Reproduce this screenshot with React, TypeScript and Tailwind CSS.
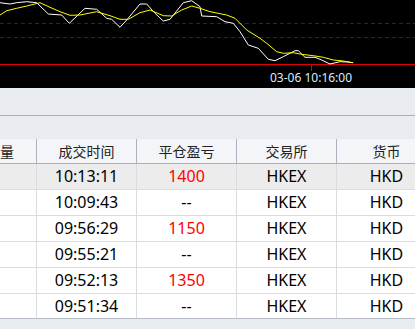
const white: [number, number][] = [
  [0, 2.7], [10, 4], [16.7, 2.7], [26.7, 1.7], [36.7, 2.7], [48.3, 14], [61.7, 15], [69.3, 23.3],
  [85, 8.3], [96.7, 9.3], [106.7, 18.3], [111.7, 19.3], [120, 27.3], [126.7, 20], [140, 4],
  [146.7, 4], [155, 13.3], [163.3, 21], [170, 19.3], [183.3, 2.7], [191.7, 0.7], [200, 6.7],
  [201.7, 16], [216.7, 16.7], [225, 21.7], [233.3, 23.3], [240, 31.7], [248.3, 45], [258.3, 48.3],
  [268.3, 59.3], [275, 60.7], [283.3, 56.7], [295, 50.7], [298.3, 50.7], [305, 57.3], [315, 57.3],
  [321.7, 60], [330, 64], [340, 61.7], [346.7, 62], [353.3, 62.7],
];

const yellow: [number, number][] = [
  [0, 15], [6.7, 10.7], [16.7, 8.3], [26.7, 6], [40, 2.7], [50, 7.3], [60, 11.7], [70, 15.3],
  [80, 15], [96.7, 11.7], [110, 15.7], [120, 19.3], [128.3, 19.3], [140, 12.7], [150, 10],
  [163.3, 15.7], [171.7, 16], [181.7, 10], [191.7, 6], [200, 8.3], [210, 11.7], [226.7, 15],
  [235, 18.3], [246.7, 30], [260, 38.3], [266.7, 43.3], [276.7, 51.7], [283.3, 53.3],
  [293.3, 52.7], [301.7, 54.3], [313.3, 55.7], [323.3, 57.3], [333.3, 60], [343.3, 61], [352.7, 62.7],
];

const pts = (p: [number, number][]) => p.map(([x, y]) => `${x},${y}`).join(" ");

const rows = [
  { time: "10:13:11", pnl: "1400", active: true },
  { time: "10:09:43", pnl: "--" },
  { time: "09:56:29", pnl: "1150" },
  { time: "09:55:21", pnl: "--" },
  { time: "09:52:13", pnl: "1350" },
  { time: "09:51:34", pnl: "--", last: true },
];

function Chart() {
  return (
    <svg width={415} height={88} className="block bg-black">
      <line x1={0} y1={23.5} x2={415} y2={23.5} stroke="#8a0000" strokeDasharray="4 3" />
      <line x1={0} y1={37.5} x2={415} y2={37.5} stroke="#8a0000" strokeDasharray="4 3" />
      <line x1={0} y1={64.5} x2={415} y2={64.5} stroke="#e00000" />
      <line x1={311.5} y1={64} x2={311.5} y2={71} stroke="#e00000" />
      <polyline points={pts(white)} fill="none" stroke="#ffffff" strokeWidth={1} />
      <polyline points={pts(yellow)} fill="none" stroke="#ffff00" strokeWidth={1} />
      <text
        x={270}
        y={82}
        fill="#d8ecff"
        fontSize={12}
        fontFamily='"Noto Sans", sans-serif'
      >
        03-06 10:16:00
      </text>
    </svg>
  );
}

export default function App() {
  const headers = ["成交时间", "平仓盈亏", "交易所", "货币"];
  return (
    <div className="h-[329px] w-[415px] overflow-hidden bg-[#e8ebf0]">
      <Chart />
      <div className="h-[28px] border-b border-[#aab1bc] bg-[#e8ebf0]" />
      <div className="h-[23px] bg-[#e8ebf0]" />
      <div className="w-[437px] font-['Noto_Sans','Noto_Sans_CJK_SC',sans-serif] text-black">
        <div className="flex h-[25px] border-b border-[#aab1bc] bg-[#f3f5f8] text-[14px] leading-[24px] font-['Noto_Sans_CJK_SC',sans-serif] text-[#222]">
          <div className="w-[37px] shrink-0 border-r border-[#aab1bc]">量</div>
          {headers.map((h) => (
            <div key={h} className="w-[100px] shrink-0 border-r border-[#aab1bc] text-center">
              {h}
            </div>
          ))}
        </div>
        {rows.map((r) => (
          <div
            key={r.time}
            className={`flex text-[16px] leading-[25px] ${
              r.last ? "h-[25px] border-b border-[#b4bac3]" : "h-[26px] border-b border-[#d9dde3]"
            } ${r.active ? "bg-[#ececec]" : "bg-white"}`}
          >
            <div className="w-[37px] shrink-0 border-r border-[#d9dde3]" />
            <div className="w-[100px] shrink-0 border-r border-[#d9dde3] text-center">{r.time}</div>
            <div
              className={`w-[100px] shrink-0 border-r border-[#d9dde3] text-center ${
                r.pnl === "--" ? "text-black" : "text-[#ff0000]"
              }`}
            >
              {r.pnl}
            </div>
            <div className="w-[100px] shrink-0 border-r border-[#d9dde3] text-center">HKEX</div>
            <div className="w-[100px] shrink-0 border-r border-[#d9dde3] text-center">HKD</div>
          </div>
        ))}
      </div>
    </div>
  );
}
